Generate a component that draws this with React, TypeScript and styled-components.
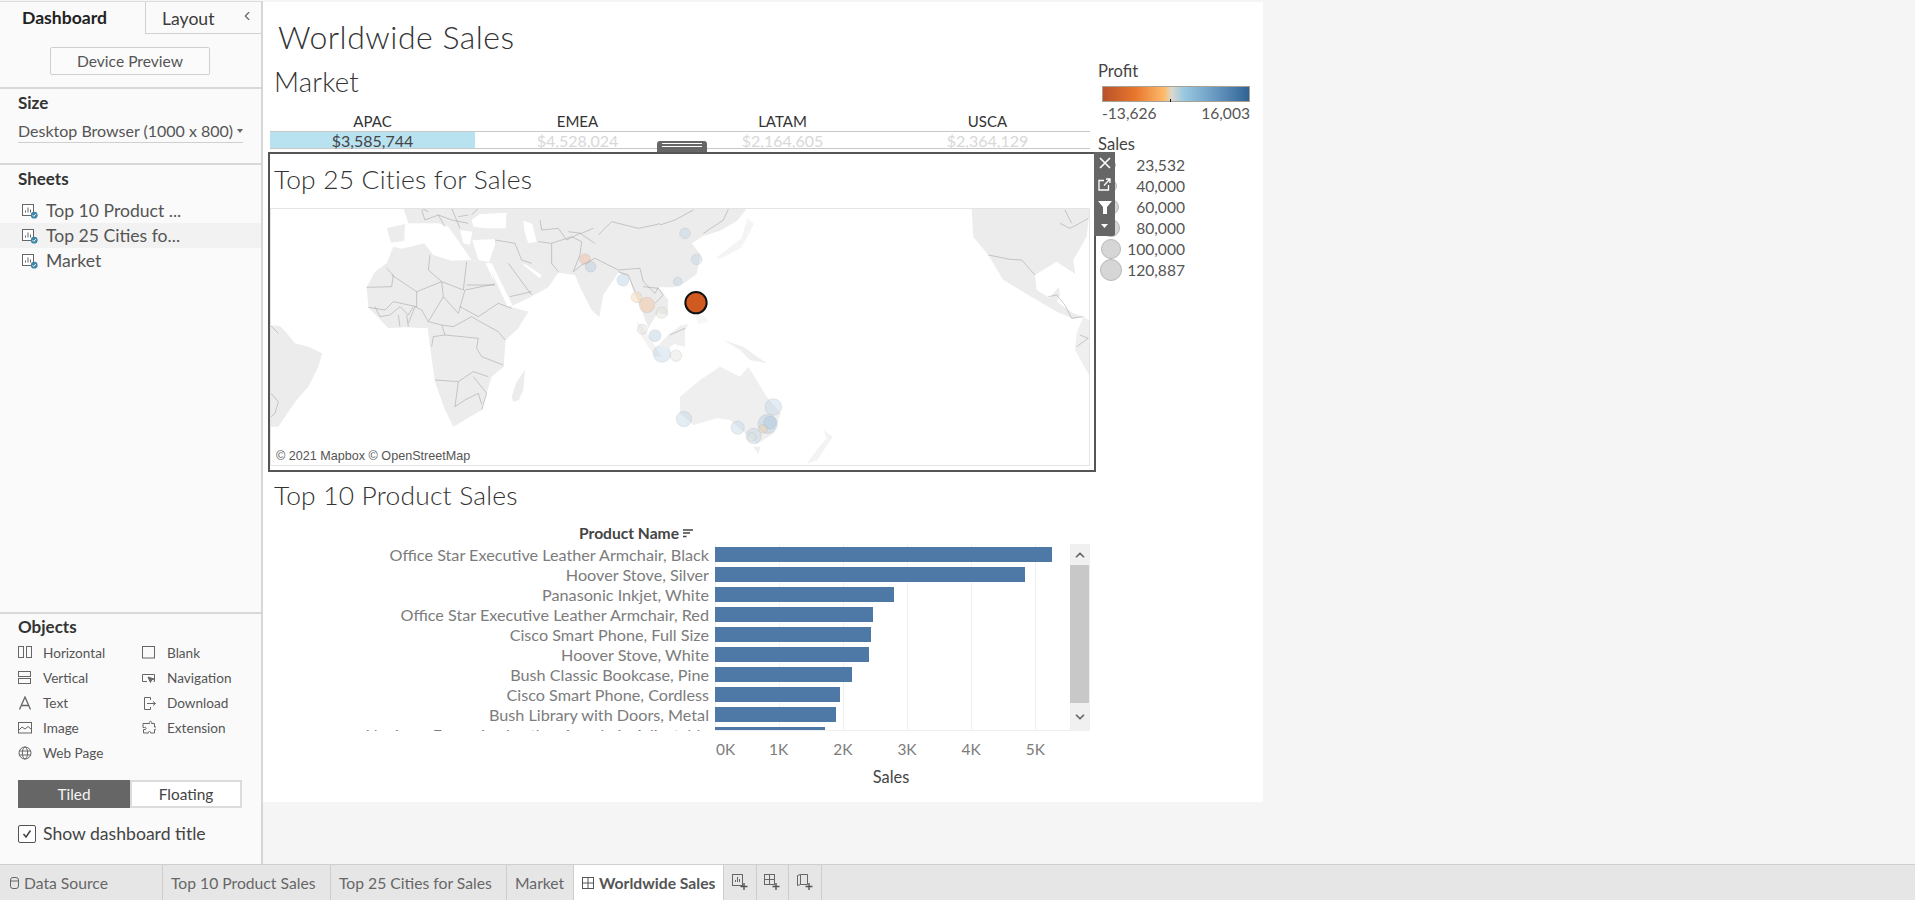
import React from 'react'
import styled, { createGlobalStyle } from 'styled-components'
import { ChevronLeft, ChevronUp, ChevronDown } from 'lucide-react'

const GlobalStyle = createGlobalStyle`
  html, body { margin: 0; padding: 0; background: #f5f5f5; }
  * { box-sizing: border-box; }
  body { font-family: Lato, "Open Sans", "Liberation Sans", sans-serif; color: #333; overflow: hidden; }
`

const Page = styled.div`
  width: 1915px;
  height: 900px;
  display: flex;
  flex-direction: column;
`
const Main = styled.div`
  flex: 1;
  min-height: 0;
  display: flex;
  padding-top: 2px;
`
const Sidebar = styled.aside`
  width: 263px;
  background: #fafafa;
  border-right: 2px solid #d6d6d6;
  border-top: 1px solid #dcdcdc;
  margin-top: -1px;
  display: flex;
  flex-direction: column;
`
const Tabs = styled.div`
  display: flex;
  height: 32px;
`
const TabActive = styled.div`
  width: 146px;
  border-right: 1px solid #d0d0d0;
  font-size: 17.6px;
  font-weight: 700;
  line-height: 22px;
  color: #222;
  padding: 5px 0 0 22px;
`
const TabIdle = styled.div`
  flex: 1;
  border-bottom: 1px solid #d0d0d0;
  font-size: 17.6px;
  line-height: 22px;
  padding: 6px 0 0 16px;
  display: flex;
  justify-content: space-between;
  color: #3c3c3c;
`
const CollapseIcon = styled(ChevronLeft)`
  margin: 1px 7px 0 0;
  color: #666;
`
const PreviewSection = styled.div`
  height: 55px;
  border-bottom: 2px solid #d8d8d8;
  padding: 13px 0 0 50px;
`
const PreviewButton = styled.div`
  width: 160px;
  height: 28px;
  border: 1px solid #cfcfcf;
  border-radius: 2px;
  background: #fbfbfb;
  font-size: 15.6px;
  color: #555;
  display: flex;
  align-items: center;
  justify-content: center;
`
const SizeSection = styled.div`
  height: 76px;
  border-bottom: 2px solid #d8d8d8;
  padding: 4px 18px 0;
`
const SectionTitle = styled.div`
  font-size: 17px;
  font-weight: 700;
  line-height: 20px;
  color: #333;
`
const SizeSelect = styled.div`
  margin-top: 6px;
  width: 225px;
  height: 24px;
  border-bottom: 1px solid #d0d0d0;
  font-size: 16px;
  color: #555;
  display: flex;
  align-items: center;
  gap: 4px;
  white-space: nowrap;
`
const Caret = styled.span`
  width: 0;
  height: 0;
  border-left: 3.5px solid transparent;
  border-right: 3.5px solid transparent;
  border-top: 4px solid #666;
`
const SheetsSection = styled.div`
  flex: 1;
  padding-top: 4px;
`
const SheetsTitle = styled(SectionTitle)`
  padding-left: 18px;
  margin-bottom: 9px;
`
const SheetRow = styled.div<{ $hover?: boolean }>`
  height: 25px;
  display: flex;
  align-items: center;
  gap: 8px;
  padding-left: 22px;
  font-size: 17.6px;
  color: #555;
  background: ${p => (p.$hover ? '#f2f2f2' : 'transparent')};
`
const ObjectsSection = styled.div`
  height: 252px;
  border-top: 2px solid #d8d8d8;
  padding: 3px 18px 0;
`
const ObjectsGrid = styled.div`
  display: grid;
  grid-template-columns: 124px 100px;
  grid-auto-rows: 25px;
  margin-top: 3px;
`
const ObjectItem = styled.div`
  display: flex;
  align-items: center;
  gap: 11px;
  font-size: 13.6px;
  color: #555;
`
const IconSlot = styled.span`
  width: 14px;
  display: flex;
  justify-content: center;
`
const ModeToggle = styled.div`
  display: flex;
  margin-top: 15px;
  width: 224px;
  height: 28px;
`
const ModeButton = styled.div<{ $on?: boolean }>`
  flex: 0 0 112px;
  display: flex;
  align-items: center;
  justify-content: center;
  font-size: 15.4px;
  background: ${p => (p.$on ? '#666' : '#fff')};
  color: ${p => (p.$on ? '#f4f4f4' : '#444')};
  border: ${p => (p.$on ? '0' : '2px solid #dcdcdc')};
`
const CheckRow = styled.div`
  display: flex;
  align-items: center;
  gap: 7px;
  margin-top: 16px;
  font-size: 17.6px;
  line-height: 20px;
  color: #444;
`
const CheckBox = styled.span`
  width: 18px;
  height: 18px;
  border: 1px solid #555;
  border-radius: 2px;
  background: #fff;
  display: flex;
  align-items: center;
  justify-content: center;
`

const Canvas = styled.main`
  width: 1000px;
  height: 800px;
  background: #fff;
  display: flex;
  flex-direction: column;
`
const DashTitle = styled.h1`
  margin: 0;
  height: 52px;
  padding: 19px 0 0 15px;
  font-size: 32px;
  line-height: 32px;
  font-weight: 300;
  color: #333;
  letter-spacing: 0.5px;
  white-space: nowrap;
`
const DashBody = styled.div`
  flex: 1;
  display: flex;
  padding-left: 5px;
`
const LeftColumn = styled.div`
  width: 828px;
  display: flex;
  flex-direction: column;
  position: relative;
  z-index: 2;
`
const MarketSheet = styled.section`
  height: 98px;
  padding: 0 6px 0 2px;
`
const SheetHeading = styled.h2`
  margin: 0;
  font-size: 26.4px;
  font-weight: 300;
  color: #333;
  padding-left: 4px;
  letter-spacing: 0.2px;
  white-space: nowrap;
`
const MarketHeading = styled(SheetHeading)`
  height: 56px;
  line-height: 56px;
  font-size: 27.6px;
`
const MarketGrid = styled.div`
  display: grid;
  grid-template-columns: repeat(4, 205px);
`
const MarketHead = styled.div`
  height: 22px;
  line-height: 22px;
  text-align: center;
  font-size: 15px;
  color: #333;
  border-bottom: 1px solid #c8c8c8;
`
const MarketCell = styled.div<{ $on?: boolean }>`
  height: 17px;
  line-height: 17px;
  text-align: center;
  font-size: 16px;
  color: ${p => (p.$on ? '#444' : '#d8d8d8')};
  background: ${p => (p.$on ? '#b9e2f1' : '#fff')};
  border-bottom: 1px solid #c8c8c8;
`
const Frame = styled.section`
  height: 320px;
  border: 2px solid #555;
  padding-right: 4px;
  position: relative;
`
const MoveHandle = styled.div`
  position: absolute;
  left: 387px;
  top: -13px;
  width: 50px;
  height: 11px;
  background: #666;
  border-radius: 3px 3px 0 0;
  padding: 2px 5px 0;
  &::before, &::after {
    content: '';
    display: block;
    height: 1px;
    background: #fff;
    margin-bottom: 2px;
  }
`
const FrameTools = styled.div`
  position: absolute;
  left: 824px;
  top: -2px;
  width: 21px;
  height: 84px;
  background: #666;
  border-radius: 0 0 2px 0;
  display: flex;
  flex-direction: column;
  align-items: center;
  justify-content: space-around;
  padding: 1px 0 3px;
`
const CitiesHeading = styled(SheetHeading)`
  height: 54px;
  line-height: 50px;
`
const MapBox = styled.div`
  height: 258px;
  position: relative;
  border: 1px solid #e4e4e4;
  overflow: hidden;
`
const MapSvg = styled.svg`
  position: absolute;
  left: -1px;
  top: -1px;
  display: block;
`
const Attribution = styled.div`
  position: absolute;
  left: 2px;
  bottom: 0;
  padding: 1px 3px;
  background: rgba(255, 255, 255, 0.75);
  font-family: "Liberation Sans", Arial, sans-serif;
  font-size: 12.6px;
  line-height: 16px;
  color: #555;
`
const ProductSheet = styled.section`
  padding-left: 2px;
`
const ProductHeading = styled(SheetHeading)`
  height: 48px;
  line-height: 46px;
`
const HeaderRow = styled.div`
  height: 24px;
  width: 445px;
  display: flex;
  justify-content: flex-end;
  align-items: center;
  gap: 4px;
  padding: 2px 22px 0 0;
  font-size: 15.6px;
  font-weight: 700;
  color: #444;
`
const ChartBody = styled.div`
  display: flex;
  height: 187px;
  width: 820px;
`
const Labels = styled.div`
  width: 445px;
  overflow: hidden;
  padding-top: 1px;
`
const Label = styled.div`
  height: 20px;
  line-height: 20px;
  text-align: right;
  padding-right: 6px;
  font-size: 16.2px;
  color: #7c7c7c;
  white-space: nowrap;
`
const Plot = styled.div`
  width: 355px;
  position: relative;
  overflow: hidden;
  padding-top: 3px;
  border-bottom: 1px solid #efefef;
`
const GridLine = styled.div`
  position: absolute;
  top: 0;
  bottom: 0;
  width: 1px;
  background: #f0f0f0;
`
const Bar = styled.div`
  position: relative;
  height: 15px;
  margin-bottom: 5px;
  background: #4e79a7;
`
const Scroller = styled.div`
  width: 20px;
  display: flex;
  flex-direction: column;
  background: #f0f0f0;
`
const ScrollButton = styled.div<{ $h: number }>`
  height: ${p => p.$h}px;
  display: flex;
  align-items: center;
  justify-content: center;
  color: #666;
`
const ScrollThumb = styled.div`
  height: 138px;
  width: 19px;
  background: #c8c8c8;
`
const AxisRow = styled.div`
  display: flex;
  height: 36px;
  padding-left: 445px;
  align-items: center;
  font-size: 15.4px;
  color: #7c7c7c;
`
const Tick = styled.div<{ $first?: boolean }>`
  width: ${p => (p.$first ? '31.5px' : '64.2px')};
  text-align: ${p => (p.$first ? 'left' : 'center')};
  padding-left: ${p => (p.$first ? '1px' : '0')};
`
const AxisTitle = styled.div`
  margin-left: 445px;
  width: 352px;
  text-align: center;
  font-size: 16.4px;
  color: #444;
`
const LegendColumn = styled.div`
  padding: 8px 0 0 2px;
  width: 160px;
`
const LegendTitle = styled.div`
  font-size: 16.6px;
  line-height: 18px;
  color: #444;
`
const Ramp = styled.div`
  position: relative;
  margin: 6px 0 0 4px;
  width: 148px;
  height: 16px;
  border: 1px solid #a8a196;
  background: linear-gradient(90deg, #b9522a 0%, #e8762c 22%, #fdbb6d 42%, #dcd8cf 47%, #9bc9e0 55%, #6c9dc4 75%, #2f6395 100%);
  &::after {
    content: '';
    position: absolute;
    left: 67px;
    bottom: -1px;
    width: 1px;
    height: 3px;
    background: #111;
  }
`
const RampLabels = styled.div`
  display: flex;
  justify-content: space-between;
  width: 148px;
  margin: 2px 0 0 4px;
  font-size: 15.6px;
  line-height: 18px;
  color: #555;
`
const SalesTitle = styled(LegendTitle)`
  margin-top: 13px;
`
const SizeRow = styled.div<{ $first?: boolean }>`
  width: 87px;
  height: 21px;
  display: flex;
  align-items: center;
  justify-content: space-between;
  font-size: 15.6px;
  color: #555;
  margin-top: ${p => (p.$first ? '1px' : '0')};
`
const SizeDotSlot = styled.span`
  width: 26px;
  display: flex;
  justify-content: center;
  flex: none;
`
const SizeDot = styled.span<{ $r: number }>`
  width: ${p => p.$r * 2}px;
  height: ${p => p.$r * 2}px;
  border-radius: 50%;
  background: #d6d6d6;
  border: 1.5px solid #b8b8b8;
`
const TabBar = styled.footer`
  height: 36px;
  display: flex;
  background: #e6e6e6;
  border-top: 1px solid #cfcfcf;
`
const SheetTab = styled.div<{ $w: number; $on?: boolean; $pad?: number }>`
  width: ${p => p.$w}px;
  display: flex;
  align-items: center;
  gap: 5px;
  padding-left: ${p => p.$pad ?? 8}px;
  border-right: 1px solid #cdcdcd;
  background: ${p => (p.$on ? '#fff' : 'transparent')};
  font-size: 15.7px;
  font-weight: ${p => (p.$on ? 700 : 400)};
  color: ${p => (p.$on ? '#555' : '#666')};
  white-space: nowrap;
`
const AddTab = styled.div`
  width: 32.5px;
  display: flex;
  align-items: center;
  justify-content: center;
  border-right: 1px solid #cdcdcd;
`

const SheetIcon = () => (
  <svg width="16" height="16" viewBox="0 0 16 16">
    <rect x="0.5" y="1.5" width="11" height="11" fill="#fff" stroke="#666" />
    <path d="M3.5 9.5v-2M6 9.5v-5M8.5 9.5v-3" stroke="#666" fill="none" />
    <circle cx="12.2" cy="12.2" r="3.4" fill="#3f86a8" />
    <path d="M10.6 12.2l1.2 1.2 2-2.2" stroke="#fff" fill="none" />
  </svg>
)

const ObjIcon = ({ name }: { name: string }) => {
  const s = { fill: 'none', stroke: '#666' }
  if (name === 'Horizontal') return <svg width="14" height="13" {...s}><rect x=".5" y=".5" width="5" height="11" /><rect x="8.5" y=".5" width="5" height="11" /></svg>
  if (name === 'Vertical') return <svg width="14" height="13" {...s}><rect x=".5" y=".5" width="12" height="5" /><rect x=".5" y="7.5" width="12" height="5" /></svg>
  if (name === 'Text') return <svg width="14" height="14" {...s} strokeWidth="1.3"><path d="M1.5 13.5L7 1l5.5 12.5M3.3 9.5h7.4" /></svg>
  if (name === 'Image') return <svg width="14" height="12" {...s}><rect x=".5" y=".5" width="13" height="10.5" /><path d="M1 8l3-3 3 2 3-2.500 3 2.500" /></svg>
  if (name === 'Web Page') return <svg width="14" height="14" {...s}><circle cx="7" cy="7" r="6" /><ellipse cx="7" cy="7" rx="2.600" ry="6" /><path d="M1 5h12M1 9h12" /></svg>
  if (name === 'Blank') return <svg width="14" height="13" {...s}><rect x=".5" y=".5" width="12" height="11.500" /></svg>
  if (name === 'Navigation') return <svg width="14" height="12" {...s}><path d="M5 9.500H.5v-7h12v7h-1" /><path d="M6 5l6 2-2.500 1-1 2.500z" fill="#666" /></svg>
  if (name === 'Download') return <svg width="14" height="14" {...s}><path d="M8.500 4V1.500h-6v12h6V11M5 7.500h8M11 5.500l2.500 2-2.500 2" /></svg>
  return <svg width="16" height="15" {...s}><path d="M5 3.500h2.500c-1-3 3-3 2 0h3V7c2.500-1 2.500 3.500 0 2.500v3.500H8.500c1-2-3-2-2 0H1.500V9.500h2c1.500-1 0-3-1-2H1V3.500z" /></svg>
}

const AddSheetIcon = ({ kind }: { kind: string }) => (
  <svg width="16" height="17" viewBox="0 0 16 17" fill="none" stroke="#666">
    {kind === 'sheet' && <><rect x=".5" y=".5" width="10" height="11" /><path d="M3.500 8V6M5.500 8V3M7.500 8V5" /></>}
    {kind === 'dash' && <><rect x=".5" y=".5" width="10" height="10" /><path d="M.5 5.500h10M5.500 .5v10" /></>}
    {kind === 'story' && <path d="M.5 1.500l3-1v10l-3 1zM3.500 .5h7v10h-7" />}
    <path d="M12 9v7M8.500 12.500h7" stroke="#555" strokeWidth="1.400" />
  </svg>
)

// map outlines are traced in crop coordinates, the <g> transforms below put them back on the page
const land: Array<[string, string]> = [
  ['M15 375L45 378 62 395 90 430 130 440 172 460 160 500 130 560 95 600 70 635 40 680 15 680Z', '#ececec'],
  ['M305 262L330 215 365 190 385 140 412 146 478 130 505 165 560 182 620 180 660 186 690 250 735 320 790 335 760 385 722 420 716 500 680 530 650 630 565 680 538 625 510 545 495 440 488 385 420 382 370 385 310 322Z', '#ececec'],
  ['M740 590L755 545 780 510 775 570 762 600 745 605Z', '#ececec'],
  ['M365 85L420 72 418 122 378 128Z', '#ececec'],
  ['M415 25L1260 25 1260 245 1215 255 1180 262 1210 300 1208 345 1178 338 1150 385 1130 330 1108 280 1090 228 1060 218 1015 285 1003 352 980 330 945 262 930 225 880 218 850 262 790 295 735 320 690 250 672 190 620 180 585 130 550 80 520 70 430 70Z', '#ececec'],
  ['M1115 365L1135 380 1190 470 1170 470 1130 410Z', '#f3f3f3'],
  ['M1210 402L1260 380 1260 440 1235 435Z', '#efefef'],
]
const seas = [
  'M620 60L645 42 725 38 722 85 660 85 625 80Z',
  'M585 90L622 95 615 135 595 130Z',
  'M622 120L690 118 690 135 672 186 640 180Z',
  'M775 62L802 72 815 125 790 130 780 100Z',
  'M668 190L680 190 742 315 728 320Z',
  'M770 190L785 195 830 225 825 235 800 215Z',
]
const landRight: Array<[string, string]> = [
  ['M0 25L260 25 232 62 180 92 130 108 95 130 122 165 110 222 72 250 40 262 0 262Z', '#ececec'],
  ['M170 172L205 145 245 115 262 55 282 72 245 142 178 178Z', '#f4f4f4'],
  ['M0 430L25 405 60 378 85 372 62 420 25 445 0 440Z', '#efefef'],
  ['M100 335L135 350 145 365 115 372Z', '#f6f6f6'],
  ['M190 420L250 440 320 490 270 480 240 450Z', '#efefef'],
  ['M60 590L120 540 180 500 240 530 265 500 320 590 362 640 342 700 292 732 210 660 170 655 100 675 60 640Z', '#efefef'],
  ['M280 740L302 740 295 762Z', '#efefef'],
  ['M490 690L518 710 472 780 440 792 470 750 500 715Z', '#f3f3f3'],
  ['M935 25L1290 25 1280 110 1240 180 1246 222 1190 185 1125 225 1130 270 1170 295 1196 260 1200 285 1190 305 1240 340 1270 350 1240 356 1190 335 1080 270 1030 240 985 165 940 110Z', '#ececec'],
  ['M1270 350L1290 362 1290 530 1245 450 1250 400Z', '#efefef'],
]
const borders = [
  'M305 262L380 260 385 225 365 205M380 225L455 275 530 245 595 270 605 185M455 275L455 320 385 305 360 330 310 322',
  'M495 165L490 210 530 245 535 290 490 365 470 330 450 320 430 370M535 290L580 340 600 270 690 252M585 320L640 350 700 310 740 325',
  'M605 255L690 255M490 365L530 375 540 405 505 410 500 440M530 375L565 380 620 350 645 365 700 395 720 420',
  'M540 405L640 415 635 445 650 470 715 495M510 540L580 545 625 515 670 530M580 545L570 620 600 600 640 580 650 612M625 530L665 580 650 630',
  'M330 320L345 350 375 345 405 320 430 345 445 320M400 345L405 380M425 345L430 380',
  'M15 375L40 400M18 580L40 605 30 640 18 650',
  'M470 30L480 60 520 45 560 60 610 70M560 25L585 85M640 25L620 45M520 45L540 80M580 50L610 45',
  'M750 130L770 180 800 190M690 120L750 130M825 60L830 90 880 85 905 120 945 100 990 130M730 190L800 285M735 290L800 275',
  'M860 130L860 190 880 215M820 125L860 130 920 110 950 125 945 165M945 165L925 215 950 195 990 175 1060 210 1125 205 1135 245 1170 280 1180 262',
  'M1000 105L1040 65 1120 85 1170 75 1240 55M1060 215L1090 225 1110 275M1135 260L1180 265 1195 285 1170 310',
  'M470 25L490 35M910 95L950 100 985 85',
]
const bordersRight = [
  'M0 75L45 60 100 30M130 100L190 60 205 28',
  'M985 165L1050 178 1085 180 1125 225M1165 290L1190 285 1215 315 1235 355 1270 350',
  'M1200 70L1230 85 1250 75 1285 55M1215 30L1235 70',
  'M1250 440L1285 415 1260 405M30 405L75 385',
]

type Dot = [number, number, number, string]
const dots: Dot[] = [
  [960, 177, 16, '#f2b08e'], [977, 200, 16, '#a9c6dd'], [1074, 240, 18, '#a9c6dd'], [1115, 292, 16, '#f6cc9f'],
  [1146, 315, 23, '#f4b98a'], [1190, 338, 17, '#dfdcd4'], [1132, 388, 15, '#dfdcd4'], [1170, 407, 18, '#a9c6dd'],
  [1191, 461, 26, '#b9d0e2'], [1233, 467, 17, '#dcdfdb'],
]
const dotsRight: Dot[] = [
  [75, 100, 16, '#b9d0e2'], [110, 178, 16, '#b9d0e2'], [53, 245, 13, '#b9d0e2'], [72, 657, 23, '#b9d0e2'],
  [340, 621, 25, '#b9d0e2'], [323, 672, 29, '#a9c6dd'], [330, 668, 19, '#a9c6dd'], [233, 683, 20, '#b9d0e2'],
  [281, 708, 23, '#b9d0e2'], [276, 711, 13, '#dcdcd4'], [309, 687, 13, '#f6cc9f'],
]

const CityDots = ({ items }: { items: Dot[] }) => (
  <>
    {items.map(([x, y, r, c]) => (
      <circle key={x + '-' + y} cx={x} cy={y} r={r} fill={c} fillOpacity=".38" stroke="#999" strokeOpacity=".28" strokeWidth="2" />
    ))}
  </>
)

const WorldMap = () => (
  <MapSvg width="820" height="258" viewBox="270 208 820 258">
    <g transform="translate(265 200) scale(0.3333)">
      {land.map(([d, f]) => <path key={d} d={d} fill={f} />)}
      {seas.map(d => <path key={d} d={d} fill="#fff" />)}
      {borders.map(d => <path key={d} d={d} fill="none" stroke="#a8a8a8" strokeWidth="1.800" />)}
      <CityDots items={dots} />
    </g>
    <g transform="translate(660 200) scale(0.3333)">
      {landRight.map(([d, f]) => <path key={d} d={d} fill={f} />)}
      {bordersRight.map(d => <path key={d} d={d} fill="none" stroke="#a8a8a8" strokeWidth="1.800" />)}
      <CityDots items={dotsRight} />
      <circle cx="108" cy="308" r="32" fill="#d15a20" stroke="#111" strokeWidth="6" />
    </g>
  </MapSvg>
)

const products: Array<[string, number]> = [
  ['Office Star Executive Leather Armchair, Black', 337],
  ['Hoover Stove, Silver', 310],
  ['Panasonic Inkjet, White', 179],
  ['Office Star Executive Leather Armchair, Red', 158],
  ['Cisco Smart Phone, Full Size', 156],
  ['Hoover Stove, White', 154],
  ['Bush Classic Bookcase, Pine', 137],
  ['Cisco Smart Phone, Cordless', 125],
  ['Bush Library with Doors, Metal', 121],
  ['Novimex Executive Leather Armchair, Adjustable', 110],
]
const gridX = [0, 63.5, 128, 192, 256, 320]
const markets: Array<[string, string, boolean]> = [
  ['APAC', '$3,585,744', true],
  ['EMEA', '$4,528,024', false],
  ['LATAM', '$2,164,605', false],
  ['USCA', '$2,364,129', false],
]
const objects = ['Horizontal', 'Blank', 'Vertical', 'Navigation', 'Text', 'Download', 'Image', 'Extension', 'Web Page']
const sizes: Array<[string, number]> = [['23,532', 5], ['40,000', 6], ['60,000', 8], ['80,000', 9], ['100,000', 10], ['120,887', 11]]

export default function App() {
  return (
    <Page>
      <GlobalStyle />
      <Main>
        <Sidebar>
          <Tabs>
            <TabActive>Dashboard</TabActive>
            <TabIdle>Layout<CollapseIcon size={14} /></TabIdle>
          </Tabs>
          <PreviewSection><PreviewButton>Device Preview</PreviewButton></PreviewSection>
          <SizeSection>
            <SectionTitle>Size</SectionTitle>
            <SizeSelect>Desktop Browser (1000 x 800)<Caret /></SizeSelect>
          </SizeSection>
          <SheetsSection>
            <SheetsTitle>Sheets</SheetsTitle>
            <SheetRow><SheetIcon />Top 10 Product ...</SheetRow>
            <SheetRow $hover><SheetIcon />Top 25 Cities fo...</SheetRow>
            <SheetRow><SheetIcon />Market</SheetRow>
          </SheetsSection>
          <ObjectsSection>
            <SectionTitle>Objects</SectionTitle>
            <ObjectsGrid>
              {objects.map(o => <ObjectItem key={o}><IconSlot><ObjIcon name={o} /></IconSlot>{o}</ObjectItem>)}
            </ObjectsGrid>
            <ModeToggle>
              <ModeButton $on>Tiled</ModeButton>
              <ModeButton>Floating</ModeButton>
            </ModeToggle>
            <CheckRow>
              <CheckBox><svg width="10" height="10" fill="none" stroke="#444" strokeWidth="1.500"><path d="M1.500 5l2.500 3 4.500-6.500" /></svg></CheckBox>
              Show dashboard title
            </CheckRow>
          </ObjectsSection>
        </Sidebar>
        <Canvas>
          <DashTitle>Worldwide Sales</DashTitle>
          <DashBody>
            <LeftColumn>
              <MarketSheet>
                <MarketHeading>Market</MarketHeading>
                <MarketGrid>
                  {markets.map(m => <MarketHead key={m[0]}>{m[0]}</MarketHead>)}
                  {markets.map(m => <MarketCell key={m[0]} $on={m[2]}>{m[1]}</MarketCell>)}
                </MarketGrid>
              </MarketSheet>
              <Frame>
                <MoveHandle />
                <FrameTools>
                  <svg width="12" height="12" stroke="#fff" strokeWidth="1.600"><path d="M1 1l10 10M11 1L1 11" /></svg>
                  <svg width="13" height="13" fill="none" stroke="#fff" strokeWidth="1.300"><path d="M6 2.500H1v9.500h9.500V7M6 7.500L12 1M8 1h4v4" /></svg>
                  <svg width="14" height="14" fill="#fff"><path d="M0 1h14L9 7v7H5V7z" /></svg>
                  <svg width="9" height="6" fill="#fff"><path d="M1 1h7L4.500 5z" /></svg>
                </FrameTools>
                <CitiesHeading>Top 25 Cities for Sales</CitiesHeading>
                <MapBox>
                  <WorldMap />
                  <Attribution>© 2021 Mapbox © OpenStreetMap</Attribution>
                </MapBox>
              </Frame>
              <ProductSheet>
                <ProductHeading>Top 10 Product Sales</ProductHeading>
                <HeaderRow>
                  Product Name
                  <svg width="10" height="9" stroke="#444" strokeWidth="1.400"><path d="M0 1h10M0 4h7M0 7.500h3.500" /></svg>
                </HeaderRow>
                <ChartBody>
                  <Labels>{products.map(p => <Label key={p[0]}>{p[0]}</Label>)}</Labels>
                  <Plot>
                    {gridX.map(x => <GridLine key={x} style={{ left: x }} />)}
                    {products.map(p => <Bar key={p[0]} style={{ width: p[1] }} />)}
                  </Plot>
                  <Scroller>
                    <ScrollButton $h={21}><ChevronUp size={14} strokeWidth={3} /></ScrollButton>
                    <ScrollThumb />
                    <ScrollButton $h={28}><ChevronDown size={14} strokeWidth={3} /></ScrollButton>
                  </Scroller>
                </ChartBody>
                <AxisRow>
                  <Tick $first>0K</Tick>
                  {['1K', '2K', '3K', '4K', '5K'].map(t => <Tick key={t}>{t}</Tick>)}
                </AxisRow>
                <AxisTitle>Sales</AxisTitle>
              </ProductSheet>
            </LeftColumn>
            <LegendColumn>
              <LegendTitle>Profit</LegendTitle>
              <Ramp />
              <RampLabels><span>-13,626</span><span>16,003</span></RampLabels>
              <SalesTitle>Sales</SalesTitle>
              {sizes.map((s, i) => (
                <SizeRow key={s[0]} $first={i === 0}>
                  <SizeDotSlot><SizeDot $r={s[1]} /></SizeDotSlot>
                  {s[0]}
                </SizeRow>
              ))}
            </LegendColumn>
          </DashBody>
        </Canvas>
      </Main>
      <TabBar>
        <SheetTab $w={163} $pad={10}>
          <svg width="9" height="12" fill="none" stroke="#666"><rect x=".5" y=".5" width="8" height="11" rx="2.500" /><path d="M.5 4h8" /></svg>
          Data Source
        </SheetTab>
        <SheetTab $w={168}>Top 10 Product Sales</SheetTab>
        <SheetTab $w={176}>Top 25 Cities for Sales</SheetTab>
        <SheetTab $w={67}>Market</SheetTab>
        <SheetTab $w={150} $on>
          <svg width="12" height="12" fill="none" stroke="#555"><rect x=".5" y=".5" width="11" height="11" /><path d="M.5 6h11M6 .5v11" /></svg>
          Worldwide Sales
        </SheetTab>
        <AddTab><AddSheetIcon kind="sheet" /></AddTab>
        <AddTab><AddSheetIcon kind="dash" /></AddTab>
        <AddTab><AddSheetIcon kind="story" /></AddTab>
      </TabBar>
    </Page>
  )
}
